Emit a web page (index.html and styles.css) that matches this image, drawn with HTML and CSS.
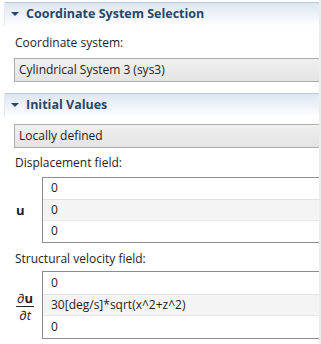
FILE: index.html
```
<!DOCTYPE html>
<html lang="en">
<head>
	<meta charset="UTF-8">
	<title>Settings</title>
	<link rel="stylesheet" href="styles.css">
</head>
<body>
	<div id="page">
		<!-- Coordinate system -->
		<div class="sec_head">
			<span class="tri"></span>Coordinate System Selection
		</div>
		<div class="sec_body first">
			<div class="label">Coordinate system:</div>
			<div class="combo">Cylindrical System 3 (sys3)</div>
		</div>

		<!-- Initial values -->
		<div class="sec_head">
			<span class="tri"></span>Initial Values
		</div>
		<div class="sec_body">
			<div class="combo">Locally defined</div>
			<div class="label">Displacement field:</div>
			<div class="field">
				<div class="sym"><b>u</b></div>
				<div class="matrix">
					<div class="cell">0</div>
					<div class="cell alt">0</div>
					<div class="cell">0</div>
				</div>
			</div>
			<div class="label near">Structural velocity field:</div>
			<div class="field tall">
				<div class="sym">
					<div class="frac">
						<span class="num">&part;<b>u</b></span>
						<span class="den">&part;<i>t</i></span>
					</div>
				</div>
				<div class="matrix">
					<div class="cell">0</div>
					<div class="cell alt">30[deg/s]*sqrt(x^2+z^2)</div>
					<div class="cell">0</div>
				</div>
			</div>
		</div>
	</div>
</body>
</html>
```
FILE: styles.css
```
*{
	margin: 0;
	padding: 0;
	box-sizing: border-box;
}
body{
	background: #fff;
	font-family: "Open Sans", "Liberation Sans", sans-serif;
	font-size: 12px;
	color: #1e1e1e;
}
#page{
	width: 321px;
	height: 344px;
	overflow: hidden;
	border-right: 2px solid #ededed;
	padding-top: 2px;
}
.sec_head{
	margin-left: 4px;
	height: 24px;
	border-top: 1px solid #b8c9da;
	border-left: 1px solid #e2e9f1;
	border-top-left-radius: 2px;
	background: linear-gradient(#dde6f1, #fff);
	display: flex;
	align-items: center;
	padding: 0 0 2px 6px;
	font-weight: bold;
	font-size: 12.5px;
	color: #27476c;
}
.tri{
	width: 0;
	height: 0;
	border-left: 4px solid transparent;
	border-right: 4px solid transparent;
	border-top: 4px solid #27476c;
	margin-right: 7px;
	margin-top: 1px;
}
.sec_body{
	padding: 7px 0 0 14px;
}
.sec_body.first{
	padding-top: 9px;
}
.label{
	line-height: 16px;
	padding-left: 1px;
	margin-bottom: 6px;
}
.first .label{
	margin-bottom: 7px;
}
.label.near{
	margin-bottom: 4px;
}
.combo{
	height: 24px;
	border: 1px solid #acacac;
	border-right: none;
	background: linear-gradient(#f0f0f0, #e4e4e4);
	line-height: 21px;
	padding-left: 4px;
	margin-bottom: 7px;
}
.first .combo{
	margin-bottom: 11px;
}
.field{
	display: flex;
	align-items: center;
	margin-bottom: 8px;
}
.sym{
	width: 28px;
	padding-left: 2px;
	font-size: 13px;
}
.frac{
	display: inline-flex;
	flex-direction: column;
	align-items: center;
	font-size: 13px;
	line-height: 14px;
}
.frac .num{
	border-bottom: 1px solid #222;
	padding: 0 1px 1px;
}
.frac .den{
	padding-top: 1px;
}
.matrix{
	flex: 1;
	border: 1px solid #8d8d8d;
	border-right: none;
}
.cell{
	height: 21px;
	line-height: 20px;
	padding-left: 8px;
}
.cell.alt{
	background: #f4f4f4;
	border-top: 1px solid #e2e2e2;
	border-bottom: 1px solid #e9e9e9;
	height: 22px;
	line-height: 19px;
}
.tall .cell{
	height: 22px;
	line-height: 21px;
}
.tall .cell.alt{
	line-height: 19px;
}
```
